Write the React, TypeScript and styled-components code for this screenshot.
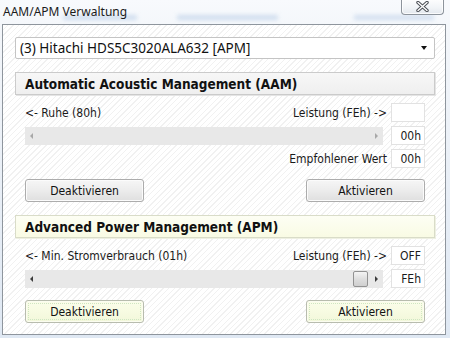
import React from "react";
import styled, { createGlobalStyle } from "styled-components";

const GlobalStyle = createGlobalStyle`
  html, body { margin: 0; padding: 0; }
  body { width: 450px; height: 338px; overflow: hidden; background: #e4ecf6; }
`;

const BODY_FONT = `"DejaVu Sans Condensed", "DejaVu Sans", sans-serif`;
const UI_FONT = `"Noto Sans", "Open Sans", sans-serif`;

const Screen = styled.div`
  width: 450px;
  height: 338px;
  display: flex;
  flex-direction: column;
  background: linear-gradient(180deg, #f8fafd 0%, #f3f6fa 10%, #dfe8f3 100%);
  overflow: hidden;
`;

const TitleBar = styled.div`
  position: relative;
  height: 24px;
  flex: none;
  display: flex;
  align-items: flex-start;
  justify-content: space-between;
  padding-left: 3px;
  padding-right: 6px;

  &::before {
    content: "";
    position: absolute;
    left: 60px;
    right: 12px;
    top: 15px;
    height: 5px;
    background:
      linear-gradient(90deg, #c3d5ea, #c3d5ea) 3px 0 / 74px 100% no-repeat,
      linear-gradient(90deg, #c3d5ea, #c3d5ea) 117px 0 / 101px 100% no-repeat,
      linear-gradient(90deg, #c8d8ec, #c8d8ec) 294px 0 / 80px 100% no-repeat;
    filter: blur(2px);
    opacity: 0.75;
  }
`;

const Title = styled.span`
  position: relative;
  margin-top: 3px;
  font-family: ${UI_FONT};
  font-size: 12px;
  color: #1b1b1b;
`;

const CloseButton = styled.div`
  position: relative;
  width: 41px;
  height: 16px;
  margin-top: -2px;
  border: 1px solid #8d949c;
  border-top: none;
  border-radius: 0 0 4px 4px;
  background: linear-gradient(180deg, #ffffff 0%, #f1f4f7 60%, #e3e8ee 100%);
  box-shadow: inset 0 0 0 1px rgba(255, 255, 255, 0.8);
  display: flex;
  align-items: center;
  justify-content: center;
`;

const Frame = styled.div`
  margin-left: 2px;
  width: 420px;
  height: 297px;
  flex: none;
  border: 1px solid #8e959d;
  background-color: #ffffff;
  background-image: repeating-linear-gradient(
    135deg,
    #ffffff 0px,
    #ffffff 3px,
    #f1f1f1 3px,
    #f1f1f1 4px
  );
  padding: 12px 10px 0 12px;
  box-sizing: content-box;
  display: flex;
  flex-direction: column;
  font-family: ${BODY_FONT};
  font-size: 12px;
  color: #1a1a1a;
`;

const Combo = styled.div`
  height: 20px;
  border: 1px solid #c4c4c4;
  border-radius: 2px;
  background: #ffffff;
  display: flex;
  align-items: center;
  justify-content: space-between;
  padding: 0 7px 0 4px;
  font-family: ${UI_FONT};
  font-size: 13.5px;
  color: #111;
`;

const ComboArrow = styled.span`
  width: 0;
  height: 0;
  border-left: 3.5px solid transparent;
  border-right: 3.5px solid transparent;
  border-top: 4px solid #111;
`;

const Section = styled.section`
  margin-top: 13px;
  display: flex;
  flex-direction: column;
`;

const Header = styled.div<{ $tint: "gray" | "yellow" }>`
  height: 21px;
  border: 1px solid ${(p) => (p.$tint === "yellow" ? "#d9dcc8" : "#cbcbcb")};
  box-shadow: 1px 1px 0 ${(p) => (p.$tint === "yellow" ? "#eef0e2" : "#e4e4e4")};
  background: ${(p) =>
    p.$tint === "yellow"
      ? "linear-gradient(180deg, #fdfef4 0%, #f9fbe4 100%)"
      : "linear-gradient(180deg, #f7f7f7 0%, #efefef 100%)"};
  display: flex;
  align-items: center;
  padding-left: 9px;
  font-weight: bold;
  font-size: 13.5px;
  color: #111;
`;

const SectionBody = styled.div<{ $top: number }>`
  margin-top: ${(p) => p.$top}px;
  padding: 0 10px;
  display: grid;
  grid-template-columns: 1fr 34px;
  column-gap: 4px;
  row-gap: 4px;
  align-items: center;
`;

const LabelRow = styled.div`
  display: flex;
  justify-content: space-between;
  align-items: center;
  white-space: nowrap;
`;

const RightLabel = styled.div`
  text-align: right;
  white-space: nowrap;
`;

const ValueBox = styled.div`
  height: 17px;
  border: 1px solid #e2e2e2;
  background: #ffffff;
  display: flex;
  align-items: center;
  justify-content: flex-end;
  padding-right: 3px;
`;

const Track = styled.div`
  position: relative;
  height: 18px;
  margin-right: 4px;
  background: #e8e8e8;
  display: flex;
  align-items: center;
  justify-content: space-between;
  padding: 0 5px;
`;

const Arrow = styled.span<{ $dir: "left" | "right"; $active: boolean }>`
  width: 0;
  height: 0;
  border-top: 3px solid transparent;
  border-bottom: 3px solid transparent;
  ${(p) =>
    p.$dir === "left"
      ? `border-right: 3px solid ${p.$active ? "#3c3c3c" : "#a8a8a8"};`
      : `border-left: 3px solid ${p.$active ? "#3c3c3c" : "#a8a8a8"};`}
`;

const Thumb = styled.div`
  position: absolute;
  top: 1px;
  width: 13px;
  height: 14px;
  border: 1px solid #929292;
  border-radius: 2px;
  background: linear-gradient(180deg, #f4f4f4 0%, #dedede 50%, #cfcfcf 100%);
`;

const ButtonRow = styled.div<{ $top: number }>`
  grid-column: 1 / -1;
  margin-top: ${(p) => p.$top}px;
  display: flex;
  justify-content: space-between;
`;

const Button = styled.button<{ $tint: "gray" | "yellow" }>`
  width: 119px;
  height: 23px;
  border: 1px solid ${(p) => (p.$tint === "yellow" ? "#b8bcae" : "#acacac")};
  border-radius: 3px;
  background: ${(p) =>
    p.$tint === "yellow"
      ? "linear-gradient(180deg, #fbfdea 0%, #f7fbe2 50%, #f2f7da 100%)"
      : "linear-gradient(180deg, #f6f6f6 0%, #ececec 50%, #dfdfdf 100%)"};
  box-shadow: inset 0 0 0 1px ${(p) => (p.$tint === "yellow" ? "#fbfdf0" : "#fbfbfb")};
  font-family: ${BODY_FONT};
  font-size: 12px;
  color: #111;
  padding: 0;
  outline: ${(p) => (p.$tint === "yellow" ? "1px dotted #cfe6c2" : "none")};
  outline-offset: -4px;
`;

type SectionData = {
  title: string;
  tint: "gray" | "yellow";
  left: string;
  right: string;
  top: string;
  bottom: string;
  recommended?: string;
  thumb?: number;
  bodyTop: number;
  buttonsTop: number;
};

const sections: SectionData[] = [
  {
    title: "Automatic Acoustic Management (AAM)",
    tint: "gray",
    left: "<- Ruhe (80h)",
    right: "Leistung (FEh) ->",
    top: "",
    bottom: "00h",
    recommended: "00h",
    bodyTop: 8,
    buttonsTop: 7,
  },
  {
    title: "Advanced Power Management (APM)",
    tint: "yellow",
    left: "<- Min. Stromverbrauch (01h)",
    right: "Leistung (FEh) ->",
    top: "OFF",
    bottom: "FEh",
    thumb: 0xfe,
    bodyTop: 8,
    buttonsTop: 8,
  },
];

const TRACK_WIDTH = 358;
const ARROW_SPACE = 15;
const THUMB_WIDTH = 15;

function XGlyph() {
  return (
    <svg width="13" height="11" viewBox="0 0 13 11">
      <path d="M2 1.5 L11 9.5 M11 1.5 L2 9.5" stroke="#4b4f55" strokeWidth="3.4" strokeLinecap="round" />
      <path d="M2 1.5 L11 9.5 M11 1.5 L2 9.5" stroke="#ffffff" strokeWidth="1.4" strokeLinecap="round" />
    </svg>
  );
}

function SliderSection({ s }: { s: SectionData }) {
  const active = s.thumb !== undefined;
  const ratio = active ? (s.thumb! - 1) / (0xfe - 1) : 0;
  const thumbLeft = Math.round(ARROW_SPACE + ratio * (TRACK_WIDTH - 2 * ARROW_SPACE - THUMB_WIDTH));
  return (
    <Section>
      <Header $tint={s.tint}>{s.title}</Header>
      <SectionBody $top={s.bodyTop}>
        <LabelRow>
          <span>{s.left}</span>
          <span>{s.right}</span>
        </LabelRow>
        <ValueBox>{s.top}</ValueBox>
        <Track>
          <Arrow $dir="left" $active={active} />
          {active && <Thumb style={{ left: `${thumbLeft}px` }} />}
          <Arrow $dir="right" $active={active} />
        </Track>
        <ValueBox>{s.bottom}</ValueBox>
        {s.recommended !== undefined && (
          <>
            <RightLabel>Empfohlener Wert</RightLabel>
            <ValueBox>{s.recommended}</ValueBox>
          </>
        )}
        <ButtonRow $top={s.buttonsTop}>
          <Button $tint={s.tint}>Deaktivieren</Button>
          <Button $tint={s.tint}>Aktivieren</Button>
        </ButtonRow>
      </SectionBody>
    </Section>
  );
}

export default function App() {
  return (
    <>
      <GlobalStyle />
      <Screen>
        <TitleBar>
          <Title>AAM/APM Verwaltung</Title>
          <CloseButton>
            <XGlyph />
          </CloseButton>
        </TitleBar>
        <Frame>
          <Combo>
            <span>(3) Hitachi HDS5C3020ALA632 [APM]</span>
            <ComboArrow />
          </Combo>
          {sections.map((s) => (
            <SliderSection key={s.title} s={s} />
          ))}
        </Frame>
      </Screen>
    </>
  );
}
